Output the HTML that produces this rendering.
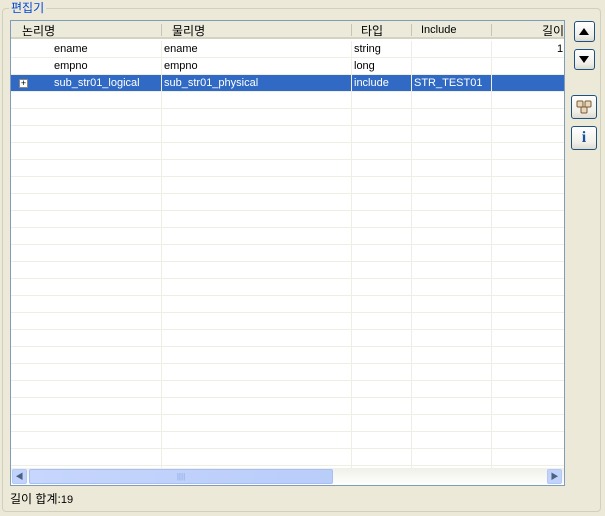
<!DOCTYPE html>
<html><head><meta charset="utf-8"><style>
*{margin:0;padding:0;box-sizing:border-box}
body{width:605px;height:516px;background:#ece9d8;font-family:"Liberation Sans","Noto Sans CJK KR","NanumGothic",sans-serif;position:relative;overflow:hidden;font-size:11px}
.grp{position:absolute;left:2px;top:8px;width:599px;height:504px;border:1px solid #d0d0bf;border-radius:4px}
.title{position:absolute;left:9px;top:1px;background:#ece9d8;color:#0046d5;font-size:12px;padding:0 2px;line-height:14px}
.tbl{position:absolute;left:10px;top:20px;width:555px;height:466px;border:1px solid #7f9db9;background:#fff;overflow:hidden}
.hdr{position:absolute;left:0;top:0;width:553px;height:18px;background:#ebeadb;border-bottom:2px solid #d6d2c2;font-size:12px;color:#000;overflow:hidden}
.hdr span{position:absolute;top:1px;white-space:nowrap}
.hs{position:absolute;top:3px;width:1px;height:12px;background:#c7c5b2}
.row{position:absolute;left:0;width:553px;height:17px;border-bottom:1px solid #efeee4}
.vl{position:absolute;top:20px;width:1px;height:428px;background:#efeee4}
.c{position:absolute;top:2px;font-size:11px;color:#000;white-space:nowrap}
.sel{background:#316ac5}
.sel .c{color:#fff}
.sb{position:absolute;left:0;top:447px;width:553px;height:17px;background:linear-gradient(#f0f0ea,#fefefe)}
.btn{position:absolute;border:1px solid #1c5180;border-radius:3px;background:linear-gradient(#fff,#f0efe9 70%,#dcdad0)}
</style></head><body>
<div class="grp"></div>
<div class="title">편집기</div>
<div class="tbl">
 <div class="hdr">
  <span style="left:11px">논리명</span>
  <div class="hs" style="left:150px"></div><span style="left:161px">물리명</span>
  <div class="hs" style="left:340px"></div><span style="left:350px">타입</span>
  <div class="hs" style="left:400px"></div><span style="left:410px;font-size:11px;top:3px">Include</span>
  <div class="hs" style="left:480px"></div><span style="left:531px">길이</span>
 </div>
 <div class="row" style="top:20px"><span class="c" style="left:43px">ename</span><span class="c" style="left:153px">ename</span><span class="c" style="left:343px">string</span><span class="c" style="left:546px">1</span></div>
 <div class="row" style="top:37px"><span class="c" style="left:43px">empno</span><span class="c" style="left:153px">empno</span><span class="c" style="left:343px">long</span></div>
 <div class="row sel" style="top:54px">
  <div style="position:absolute;left:8px;top:4px;width:9px;height:9px;border:1px solid #888;background:#fff;font-size:9px;line-height:7px;text-align:center;color:#000">+</div>
  <span class="c" style="left:43px">sub_str01_logical</span><span class="c" style="left:153px">sub_str01_physical</span><span class="c" style="left:343px">include</span><span class="c" style="left:403px">STR_TEST01</span>
  <div style="position:absolute;left:150px;top:0;width:1px;height:17px;background:#fff"></div>
  <div style="position:absolute;left:340px;top:0;width:1px;height:17px;background:#fff"></div>
  <div style="position:absolute;left:400px;top:0;width:1px;height:17px;background:#fff"></div>
  <div style="position:absolute;left:480px;top:0;width:1px;height:17px;background:#fff"></div>
 </div>
 <div id="rows"></div>
 <div class="vl" style="left:150px"></div><div class="vl" style="left:340px"></div><div class="vl" style="left:400px"></div><div class="vl" style="left:480px"></div>
 <div class="sb">
  <div style="position:absolute;left:1px;top:1px;width:15px;height:15px;border-radius:2px;background:#c1d3fb;border:1px solid #b4c8f6;color:#4d6185;font-size:8px;line-height:13px;text-align:center">◀</div>
  <div style="position:absolute;left:18px;top:1px;width:304px;height:15px;border-radius:2px;background:linear-gradient(90deg,#c6d6fc,#b9cdf9);border:1px solid #a8bef5;color:#8ea7e5;font-size:8px;text-align:center;line-height:13px">||||</div>
  <div style="position:absolute;left:536px;top:1px;width:15px;height:15px;border-radius:2px;background:#c1d3fb;border:1px solid #b4c8f6;color:#4d6185;font-size:8px;line-height:13px;text-align:center">▶</div>
 </div>
</div>
<div class="btn" style="left:574px;top:21px;width:21px;height:21px"><svg width="19" height="19"><polygon points="4,13 14,13 9,6" fill="#000"/></svg></div>
<div class="btn" style="left:574px;top:49px;width:21px;height:21px"><svg width="19" height="19"><polygon points="4,6 14,6 9,13" fill="#000"/></svg></div>
<div class="btn" style="left:571px;top:95px;width:26px;height:24px"><svg width="24" height="22"><g fill="#e8d8b8" stroke="#7a5a3a" stroke-width="1"><rect x="5" y="5" width="6" height="6" rx="1"/><rect x="13" y="5" width="6" height="6" rx="1"/><rect x="9" y="11" width="6" height="6" rx="1"/></g></svg></div>
<div class="btn" style="left:571px;top:126px;width:26px;height:24px;text-align:center;font-family:'Liberation Serif',serif;font-weight:bold;font-size:16px;color:#1a4fa0;line-height:22px">i</div>
<div style="position:absolute;left:10px;top:490px;font-size:12px">길이 합계:<span style="font-size:11px">19</span></div>
<script>
var r=document.getElementById('rows'),h='';
for(var i=0;i<23;i++){h+='<div class="row" style="top:'+(71+i*17)+'px"></div>';}
r.innerHTML=h;
</script>
</body></html>
